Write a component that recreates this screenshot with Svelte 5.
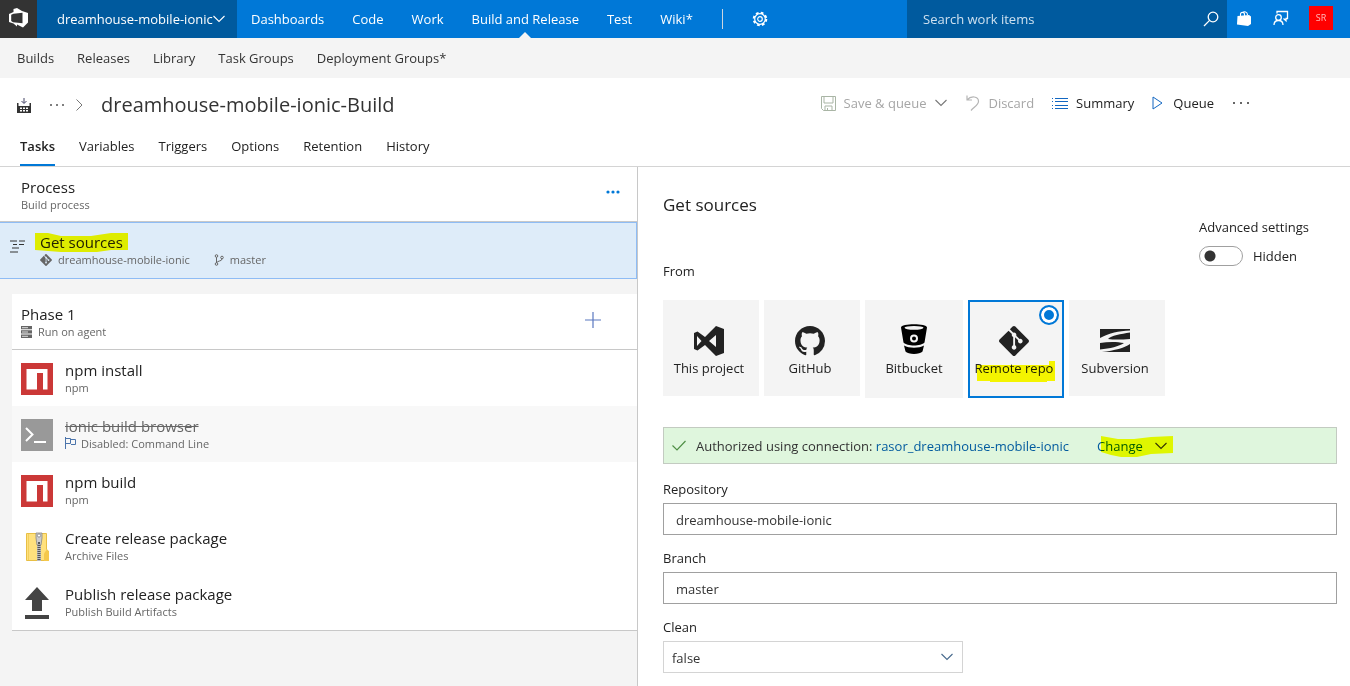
<script>
  const hubs = ['Dashboards', 'Code', 'Work', 'Build and Release', 'Test', 'Wiki*'];
  const subHubs = ['Builds', 'Releases', 'Library', 'Task Groups', 'Deployment Groups*'];
  const tabs = ['Tasks', 'Variables', 'Triggers', 'Options', 'Retention', 'History'];
  const tasks = [
    { icon: 'npm', title: 'npm install', detail: 'npm' },
    { icon: 'cmd', title: 'ionic build browser', detail: 'Disabled: Command Line', disabled: true },
    { icon: 'npm', title: 'npm build', detail: 'npm' },
    { icon: 'zip', title: 'Create release package', detail: 'Archive Files' },
    { icon: 'publish', title: 'Publish release package', detail: 'Publish Build Artifacts' }
  ];
  const sources = [
    { id: 'vsts', name: 'This project' },
    { id: 'github', name: 'GitHub' },
    { id: 'bitbucket', name: 'Bitbucket' },
    { id: 'git', name: 'Remote repo' },
    { id: 'svn', name: 'Subversion' }
  ];
  let source = $state('git');
  let advanced = $state(false);
  let repository = $state('dreamhouse-mobile-ionic');
  let branch = $state('master');
  let clean = $state('false');
</script>

{#snippet chevron()}
  <svg class="chevron" width="14" height="8" viewBox="0 0 14 8" aria-hidden="true"><path d="M1.5 1l5.5 5.5L12.500 1" fill="none" stroke="currentColor" stroke-width="1.1" /></svg>
{/snippet}

{#snippet gitMark(size)}
  <svg width={size} height={size} viewBox="0 0 24 24" fill="currentColor" aria-hidden="true"><path d="M23.546 10.93L13.067.452c-.604-.603-1.582-.603-2.188 0L8.708 2.627l2.76 2.76c.645-.215 1.379-.07 1.889.441.516.515.658 1.258.438 1.900l2.658 2.660c.645-.223 1.387-.078 1.900.435.721.720.721 1.884 0 2.604-.719.719-1.881.719-2.600 0-.539-.541-.674-1.337-.404-1.996L12.860 8.955v6.525c.176.086.342.203.488.348.713.721.713 1.883 0 2.600-.719.721-1.889.721-2.609 0-.719-.719-.719-1.879 0-2.598.182-.180.387-.316.605-.406V8.835c-.217-.091-.424-.222-.600-.401-.545-.545-.676-1.342-.396-2.009L7.636 3.700.450 10.881c-.600.605-.600 1.584 0 2.189l10.480 10.477c.604.604 1.582.604 2.186 0l10.430-10.430c.605-.603.605-1.582 0-2.187" /></svg>
{/snippet}

<div class="page">
  <header class="topbar">
    <a class="logo" href="#home" aria-label="Home">
      <svg width="19" height="20" viewBox="0 0 19 20"><path fill="#fff" fill-rule="evenodd" d="M0 6L4.500 4V1L8 0L13 3L19 5V14.500L14 19.500L8 16.500V18.500L4.500 15.500L0 14ZM2.200 6.800V13L4 14.200L13.500 15.200V4.800L4.500 5.800Z" /></svg>
    </a>
    <button class="project">dreamhouse-mobile-ionic{@render chevron()}</button>
    <nav class="hubs">
      {#each hubs as hub}
        <a href="#hub" class:current={hub === 'Build and Release'}>{hub}</a>
      {/each}
      <span class="divider"></span>
      <a href="#settings" class="gear" aria-label="Settings">
        <svg width="16" height="16" viewBox="0 0 16 16" fill="none" stroke="#fff"><circle cx="8" cy="8" r="6.300" stroke-width="2" stroke-dasharray="2.700 2.250" /><circle cx="8" cy="8" r="5.300" stroke-width="1.200" /><circle cx="8" cy="8" r="2.300" stroke-width="1.200" /></svg>
      </a>
    </nav>
    <form class="search">
      <input type="search" placeholder="Search work items" aria-label="Search work items" />
      <button type="button" aria-label="Search">
        <svg width="16" height="16" viewBox="0 0 16 16" fill="none" stroke="#fff" stroke-width="1.300"><circle cx="10" cy="6" r="4.800" /><path d="M6.600 9.400L1 15" /></svg>
      </button>
    </form>
    <div class="account">
      <button aria-label="Marketplace">
        <svg width="14" height="15" viewBox="0 0 14 15"><path fill="#fff" d="M.500 5L12 4l2 1.500V13l-3 2L0 13.500z" /><path d="M3.500 5V3.500C3.500.500 7.500.500 7.500 3.500V5M5.500 2C7 0 10.500.500 10.500 4" fill="none" stroke="#fff" stroke-width="1.100" /></svg>
      </button>
      <button aria-label="Feedback">
        <svg width="16" height="16" viewBox="0 0 16 16" fill="none" stroke="#fff" stroke-width="1.300"><path d="M4 3.500V1.500h10.500v7H13v2.300L10.500 8.500" /><circle cx="5.500" cy="7.500" r="2.800" /><path d="M1 15c0-6 9-6 9 0" /></svg>
      </button>
      <button class="avatar" aria-label="Account SR">SR</button>
    </div>
  </header>

  <nav class="subhubs">
    {#each subHubs as hub}<a href="#sub">{hub}</a>{/each}
  </nav>

  <section class="definition">
    <div class="titlebar">
      <div class="crumbs">
        <svg width="14" height="15" viewBox="0 0 14 15"><path d="M7 0v5M4.500 3L7 5.500L9.500 3" fill="none" stroke="#446" stroke-width="1" /><path fill="#333" fill-rule="evenodd" d="M0 5h1.500v3H12.500V5H14V15H0zM3 9.500v1.500h2V9.500zM6 9.500v1.500h2V9.500zM9 9.500v1.500h2V9.500zM3 12v1.500h2V12zM6 12v1.500h2V12zM9 12v1.500h2V12z" /></svg>
        <button aria-label="All definitions"><svg width="16" height="4" viewBox="0 0 16 4" fill="#555"><circle cx="2" cy="2" r="1" /><circle cx="8" cy="2" r="1" /><circle cx="14" cy="2" r="1" /></svg></button>
        <svg width="8" height="12" viewBox="0 0 8 12"><path d="M1.500.500L7 6L1.500 11.500" fill="none" stroke="#777" /></svg>
        <h1>dreamhouse-mobile-ionic-Build</h1>
      </div>
      <div class="toolbar">
        <button disabled><svg width="15" height="15" viewBox="0 0 15 15" fill="none" stroke="#a9b5a5"><path d="M.500.500h14v14h-12l-2-2zM3 1v6h9V1M4 14v-4h7v4M6.500 14v-2" /></svg>Save &amp; queue {@render chevron()}</button>
        <button disabled><svg width="14" height="16" viewBox="0 0 14 16" fill="none" stroke="#b5b5b5" stroke-width="1.200"><path d="M1 .500v4.500h5M1 5C5 .500 12.500 1 12.500 6.500C12.500 10 8 12 5 15.500" /></svg>Discard</button>
        <button><svg width="16" height="11" viewBox="0 0 16 11" stroke="#1267c2"><path d="M3 .500h13M3 3.500h13M3 7.500h13M3 10.500h13M0 .500h1M0 3.500h1M0 7.500h1M0 10.500h1" /></svg>Summary</button>
        <button class="queue"><svg width="11" height="14" viewBox="0 0 11 14" fill="none" stroke="#1267c2"><path d="M1 1v12l9-6z" /></svg>Queue</button>
        <button aria-label="More actions"><svg width="18" height="4" viewBox="0 0 18 4" fill="#333"><circle cx="2" cy="2" r="1" /><circle cx="9" cy="2" r="1" /><circle cx="16" cy="2" r="1" /></svg></button>
      </div>
    </div>
    <nav class="tabs">
      {#each tabs as tab, i}<a href="#tab" class:active={i === 0}>{tab}</a>{/each}
    </nav>
  </section>

  <main>
    <aside>
      <div class="process">
        <div><h2>Process</h2><p>Build process</p></div>
        <button aria-label="Process actions"><svg width="14" height="4" viewBox="0 0 14 4" fill="#0078d7"><circle cx="2" cy="2" r="1.600" /><circle cx="7" cy="2" r="1.600" /><circle cx="12" cy="2" r="1.600" /></svg></button>
      </div>

      <div class="sources-row">
        <svg width="15" height="20" viewBox="0 0 15 20" stroke="#333" stroke-width="1.200"><path d="M0 1h7M9 1h6M3 4.500h4M9 4.500h5M2 8h7M0 12h8" /></svg>
        <div>
          <h2 class="marked">Get sources
            <svg class="marker" viewBox="0 0 93 20" preserveAspectRatio="none"><path fill="#ff0" d="M0 0h13l13 3h30l20-3h17v17H76l-14 2H26L0 17z" /></svg>
          </h2>
          <p>
            {@render gitMark(12)}<span class="repo">dreamhouse-mobile-ionic</span>
            <svg width="10" height="12" viewBox="0 0 10 12" fill="none" stroke="#666"><circle cx="2.500" cy="2" r="1.300" /><circle cx="8" cy="3.500" r="1.300" /><circle cx="2.500" cy="10" r="1.300" /><path d="M2.500 3.300v5.400M8 5c0 2.500-5 1.500-5.500 4" /></svg>
            <span>master</span>
          </p>
        </div>
      </div>

      <div class="phase">
        <div class="phase-head">
          <div>
            <h2>Phase 1</h2>
            <p><svg width="11" height="12" viewBox="0 0 11 12"><path fill="#666" d="M0 0h11v3.300H0zM0 4.300h11v3.300H0zM0 8.600h11v3.400H0z" /><path d="M1 1.700h6M1 6h6M1 10.300h6" stroke="#ddd" /></svg>Run on agent</p>
          </div>
          <button aria-label="Add task"><svg width="16" height="16" viewBox="0 0 16 16" stroke="#5a78c0" stroke-width="1.200"><path d="M8 0v16M0 8h16" /></svg></button>
        </div>
        <ul>
          {#each tasks as task}
            <li class:disabled={task.disabled}>
              <svg width="32" height="32" viewBox="0 0 32 32">
                {#if task.icon === 'npm'}
                  <path fill="#cb3837" d="M0 0h32v32H0z" /><path fill="#fff" d="M5.500 6h21v20.500h-4.500V10h-6v16.500H5.500z" />
                {:else if task.icon === 'cmd'}
                  <path fill="#999" d="M0 0h32v32H0z" /><path d="M5 9l6.500 6.500L5 22M13 23h12" fill="none" stroke="#fff" stroke-width="2" />
                {:else if task.icon === 'zip'}
                  <path fill="#ffe17d" stroke="#e8bf45" d="M5.500 2.500h20v16l2 1.500v9.500h-22z" /><path fill="#f5c84c" d="M24 21l2-2.500 2 2.500v9h-5v-7z" /><path d="M7.500 3v26" stroke="#f3ce5d" /><path fill="#ccc" stroke="#888" stroke-width=".800" d="M15 2h6v5l-1 7h-4l-1-7z" /><circle cx="18" cy="4.500" r="1.600" fill="#fff" stroke="#777" stroke-width=".700" /><path fill="#bbb" d="M16 14h4v16h-4z" /><path d="M18 14v16" stroke="#555" stroke-width="3" stroke-dasharray="1 1" /><circle cx="18" cy="12" r="1" fill="#333" />
                {:else}
                  <path fill="#444" d="M16 0l12 13h-7v11H11V13H4zM4 28h24v4H4z" />
                {/if}
              </svg>
              <div>
                <h3>{task.title}</h3>
                <p>{#if task.disabled}<svg width="11" height="12" viewBox="0 0 11 12" fill="none" stroke="#4b74ab"><path d="M.500 0v12M.500 1.500h5v5h-5M5.500 2.500h5v5H6" /></svg>{/if}{task.detail}</p>
              </div>
            </li>
          {/each}
        </ul>
      </div>
    </aside>

    <section class="details">
      <div class="details-head">
        <div>
          <h2>Get sources</h2>
          <p id="from">From</p>
        </div>
        <div class="advanced">
          <label for="advanced">Advanced settings</label>
          <div><input id="advanced" type="checkbox" role="switch" bind:checked={advanced} /><span>{advanced ? 'Shown' : 'Hidden'}</span></div>
        </div>
      </div>

      <div class="cards" role="radiogroup" aria-labelledby="from">
        {#each sources as item}
          <label class="card {item.id}" class:selected={source === item.id}>
            <input type="radio" name="source" value={item.id} bind:group={source} />
            {#if item.id === 'vsts'}
              <svg width="30" height="30" viewBox="0 0 30 30"><path fill="#222" fill-rule="evenodd" d="M22 0l8 3v24l-8 3L11 19l-7.500 5.500L0 23V7l3.500-1.500L11 11zM3 10v10l4.500-5zM22 9l-7 6 7 6z" /></svg>
            {:else if item.id === 'github'}
              <svg width="30" height="30" viewBox="0 0 16 16" fill="#222"><path d="M8 0C3.580 0 0 3.580 0 8c0 3.540 2.290 6.530 5.470 7.590.4.070.55-.170.55-.380 0-.190-.010-.820-.010-1.490-2.010.370-2.530-.490-2.690-.940-.090-.230-.480-.940-.820-1.130-.280-.150-.680-.520-.010-.530.630-.010 1.080.580 1.230.820.720 1.210 1.870.870 2.330.660.070-.520.280-.870.510-1.070-1.780-.200-3.640-.890-3.640-3.950 0-.870.310-1.590.820-2.150-.080-.200-.360-1.020.080-2.120 0 0 .670-.210 2.200.820.640-.180 1.320-.270 2-.270.680 0 1.360.090 2 .270 1.530-1.040 2.200-.820 2.200-.820.440 1.100.160 1.920.080 2.120.510.560.820 1.270.820 2.150 0 3.070-1.870 3.750-3.650 3.950.290.250.540.730.540 1.480 0 1.070-.010 1.930-.010 2.200 0 .210.150.460.550.380A8.013 8.013 0 0 0 16 8c0-4.420-3.580-8-8-8z" /></svg>
            {:else if item.id === 'bitbucket'}
              <svg width="30" height="30" viewBox="0 0 30 30"><path d="M2 3.500C2-.800 28-.800 28 3.500L25.500 18.500C22 22.500 8 22.500 4.500 18.500zM5 21.500C10 24.500 20 24.500 25 21.500L23.500 27.500C21 30.800 9 30.800 6.500 27.500z" /><ellipse cx="15" cy="3.800" rx="9.500" ry="1.900" fill="#f4f4f4" /><circle cx="15" cy="14.500" r="3" stroke="#f4f4f4" stroke-width="2" /></svg>
            {:else if item.id === 'git'}
              {@render gitMark(30)}
            {:else}
              <svg width="30" height="30" viewBox="0 0 30 30"><path fill="#222" d="M0 3h30v1.500C18 5 10 7 0 12zM30 6.500V13C22 13.500 15 14 8 13C11 9.500 21 8 30 6.500zM0 17C8 15.500 17 15.500 24 17C19 20.500 10 22.500 0 23.500zM30 18v8H2C15 24.500 24 22 30 18z" /></svg>
            {/if}
            <span class:marked={item.id === 'git'}>{item.name}{#if item.id === 'git'}<svg class="marker" viewBox="0 0 78 21" preserveAspectRatio="none"><path fill="#ff0" d="M0 4h72V0h6v20h-8v1H13v-1H0z" /></svg>{/if}</span>
          </label>
        {/each}
      </div>

      <div class="banner">
        <svg width="14" height="11" viewBox="0 0 14 11"><path d="M.500 5.500l4.500 4.500L13.500 1" fill="none" stroke="#4f8f45" stroke-width="1.200" /></svg>
        <span>Authorized using connection: <a href="#connection">rasor_dreamhouse-mobile-ionic</a></span>
        <button class="marked">Change {@render chevron()}
          <svg class="marker" viewBox="0 0 72 21" preserveAspectRatio="none"><path fill="#ff0" d="M0 0l17 3h16L50 1l22-1v17l-22 1-14 3H20L10 19 0 16z" /></svg>
        </button>
      </div>

      <label class="field" for="repository">Repository</label>
      <input class="text" id="repository" bind:value={repository} />
      <label class="field" for="branch">Branch</label>
      <input class="text" id="branch" bind:value={branch} />
      <label class="field" for="clean">Clean</label>
      <div class="select">
        <select id="clean" bind:value={clean}><option>false</option><option>true</option></select>
        {@render chevron()}
      </div>
    </section>
  </main>
</div>

<style>
  :global(body) { margin: 0; }
  .page, .page * { box-sizing: border-box; }
  .page {
    display: flex; flex-direction: column; min-height: 100vh; background: #fff;
    color: #222; font: 13px/20px "Open Sans", "Noto Sans", sans-serif;
  }
  h1, h2, h3, p, ul { margin: 0; padding: 0; font-weight: 400; }
  a { color: inherit; text-decoration: none; }
  button { padding: 0; border: 0; background: none; color: inherit; font: inherit; display: flex; align-items: center; }
  svg { flex: none; display: block; }

  .topbar { display: flex; height: 38px; background: #0078d7; color: #fff; }
  .logo { width: 37px; display: grid; place-items: center; background: #333; padding-bottom: 2px; }
  .project { width: 200px; padding-left: 20px; background: #005a9e; white-space: nowrap; }
  .project .chevron { margin-left: -1px; }
  .hubs { display: flex; align-items: center; flex: 1; }
  .hubs a { position: relative; padding: 0 14px; line-height: 38px; white-space: nowrap; }
  .hubs .current::after {
    content: ""; position: absolute; left: 50%; bottom: 0; margin-left: -6px;
    border: 6px solid transparent; border-top: 0; border-bottom-color: #f4f4f4;
  }
  .divider { width: 1px; height: 20px; margin: 0 15px; background: #cbd5df; }
  .search { display: flex; width: 320px; background: #005a9e; padding: 0 8px 0 16px; }
  .search input { flex: 1; min-width: 0; padding: 0; border: 0; outline: 0; background: none; color: #fff; font: inherit; }
  .search input::placeholder { color: #cde0ef; opacity: 1; }
  .account { display: flex; align-items: center; gap: 22px; padding: 0 17px 2px 10px; }
  .account .avatar { width: 24px; height: 24px; justify-content: center; margin-left: -2px; background: #f00; color: #fbb; font-size: 9px; }

  .subhubs { display: flex; align-items: center; gap: 23px; height: 40px; padding: 0 17px; background: #f4f4f4; color: #333; }

  .definition { border-bottom: 1px solid #d4d4d4; }
  .titlebar { display: flex; justify-content: space-between; padding: 13px 100px 0 17px; }
  .crumbs { display: flex; align-items: center; gap: 18px; color: #333; }
  .crumbs > svg:nth-of-type(2) { margin-left: -8px; }
  h1 { font-size: 20px; line-height: 28px; }
  .toolbar { display: flex; align-items: center; gap: 18px; height: 24px; }
  .toolbar button { gap: 8px; }
  .toolbar button:disabled { color: #a6a6a6; }
  .toolbar .chevron { color: #777; }
  .toolbar .queue { gap: 10px; }
  .tabs { display: flex; gap: 24px; padding: 15px 20px 0; }
  .tabs a { padding: 2px 0 8px; border-bottom: 2px solid transparent; }
  .tabs .active { border-color: #0078d7; font-weight: 600; }

  main { flex: 1; display: grid; grid-template-columns: 638fr 712fr; }
  aside { border-right: 1px solid #c8c8c8; background: #f4f4f4; }
  aside h2, aside h3 { font-size: 15px; line-height: 20px; }
  aside p { display: flex; align-items: center; color: #666; font-size: 11px; line-height: 15px; }
  .process { display: flex; justify-content: space-between; padding: 10px 17px 9px 21px; background: #fff; border-bottom: 1px solid #c8c8c8; }
  .process button { height: 30px; }
  .sources-row { display: flex; align-items: center; gap: 15px; height: 57px; padding: 0 10px 2px; background: #deecf9; border: solid #8ebcf5; border-width: 1px 1px 1px 0; }
  .sources-row p { gap: 6px; }
  .repo { margin-right: 18px; }
  .phase { margin: 15px 0 0 12px; border-bottom: 1px solid #c8c8c8; background: #fff; }
  .phase-head { display: flex; justify-content: space-between; height: 56px; padding: 10px 36px 0 9px; border-bottom: 1px solid #c8c8c8; }
  .phase-head p { gap: 6px; }
  .phase-head button { height: 32px; }
  ul { list-style: none; }
  li { display: flex; align-items: center; gap: 12px; height: 56px; padding: 2px 9px 0; }
  li > div { padding-bottom: 4px; }
  li p { gap: 5px; }
  .disabled { background: #f8f8f8; }
  .disabled h3 { color: #666; text-decoration: line-through; }

  .marked { position: relative; width: max-content; }
  .marker { position: absolute; mix-blend-mode: multiply; pointer-events: none; }
  h2 .marker { left: -5px; top: 1px; width: 93px; height: 20px; }

  .details { padding: 28px 13px 12px 25px; }
  .details h2 { font-size: 17px; }
  .details-head { display: flex; justify-content: space-between; gap: 20px; }
  .details-head p { margin-top: 46px; }
  .advanced { width: 138px; padding-top: 22px; }
  .advanced div { display: flex; align-items: center; gap: 10px; margin-top: 9px; }
  .advanced input {
    appearance: none; width: 44px; height: 20px; margin: 0; border: 1px solid #a0a0a0; border-radius: 10px;
    background: radial-gradient(circle at 10px 9px, #333 5px, transparent 6px);
  }
  .cards { display: flex; align-items: flex-start; gap: 5px; margin-top: 19px; }
  .card {
    position: relative; display: flex; flex-direction: column; align-items: center; gap: 2px;
    width: 96px; height: 96px; padding: 26px 4px 0 0; background: #f4f4f4; white-space: nowrap;
  }
  .card.bitbucket { width: 98px; height: 98px; padding: 24px 0 0; gap: 4px; }
  .card.selected { height: 98px; padding-top: 24px; border: 2px solid #0078d7; }
  .card input { position: absolute; appearance: none; top: 3px; right: 3px; width: 20px; height: 20px; margin: 0; border-radius: 50%; opacity: 0; }
  .card input:checked { opacity: 1; border: 2px solid #0078d7; background: #0078d7; box-shadow: inset 0 0 0 3px #fff; }
  .card .marker { left: 2px; top: 3px; width: 78px; height: 21px; }
  .banner { display: flex; align-items: center; height: 37px; margin-top: 29px; padding: 0 8px; border: 1px solid #c3cbc1; background: #dff6dd; color: #333; }
  .banner span { margin: 0 28px 0 10px; }
  .banner a, .banner button { color: #005a9e; }
  .banner button { gap: 11px; }
  .banner .chevron { color: #333; }
  .banner .marker { left: 4px; top: 0; width: 72px; height: 21px; }
  .field { display: block; margin: 13px 0 4px; }
  .banner + .field { margin-top: 15px; }
  .text { display: block; width: 100%; height: 32px; padding: 2px 12px 0; border: 1px solid #a0a0a0; border-radius: 0; color: #333; font: inherit; }
  .select { position: relative; width: 300px; }
  select { appearance: none; display: block; width: 100%; height: 32px; padding: 2px 8px 0; border: 1px solid #d4d4d4; border-radius: 0; background: #fff; color: #333; font: inherit; }
  .select .chevron { position: absolute; right: 9px; top: 12px; color: #47698c; pointer-events: none; }
</style>
